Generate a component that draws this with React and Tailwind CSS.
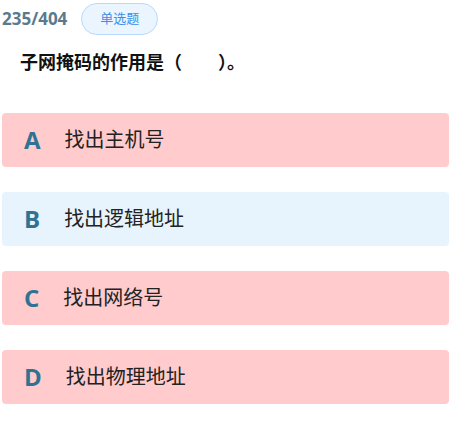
const options = [
  { key: 'A', text: '找出主机号', wrong: true },
  { key: 'B', text: '找出逻辑地址', wrong: false },
  { key: 'C', text: '找出网络号', wrong: true },
  { key: 'D', text: '找出物理地址', wrong: true },
];

export default function App() {
  return (
    <div className="w-[454px] h-[422px] bg-white px-[2px] font-['Open_Sans','Noto_Sans_CJK_SC',sans-serif]">
      {/* header */}
      <div className="flex items-center gap-[14px] pt-[3px] h-[35px]">
        <span className="text-[17px] font-bold text-[#5b7a8e]">235/404</span>
        <span className="h-[32px] w-[77px] flex items-center justify-center rounded-full border border-[#b9d9fb] bg-[#ebf5ff] text-[13px] text-[#3d8ee8]">
          单选题
        </span>
      </div>

      <h2 className="mt-[14px] pl-[18px] text-[18px] font-bold text-[#111] leading-[26px]">
        子网掩码的作用是（　　）。
      </h2>

      <div className="mt-[38px] flex flex-col gap-[25px] pr-[3px]">
        {options.map((o) => (
          <div
            key={o.key}
            className={
              'h-[54px] rounded flex items-center ' +
              (o.wrong ? 'bg-[#ffcbcc]' : 'bg-[#e7f4fd]')
            }
          >
            <span className="ml-[22px] mr-[24px] text-[24px] font-bold text-[#2f7394]">{o.key}</span>
            <span className="text-[20px] text-[#222]">{o.text}</span>
          </div>
        ))}
      </div>
    </div>
  );
}
